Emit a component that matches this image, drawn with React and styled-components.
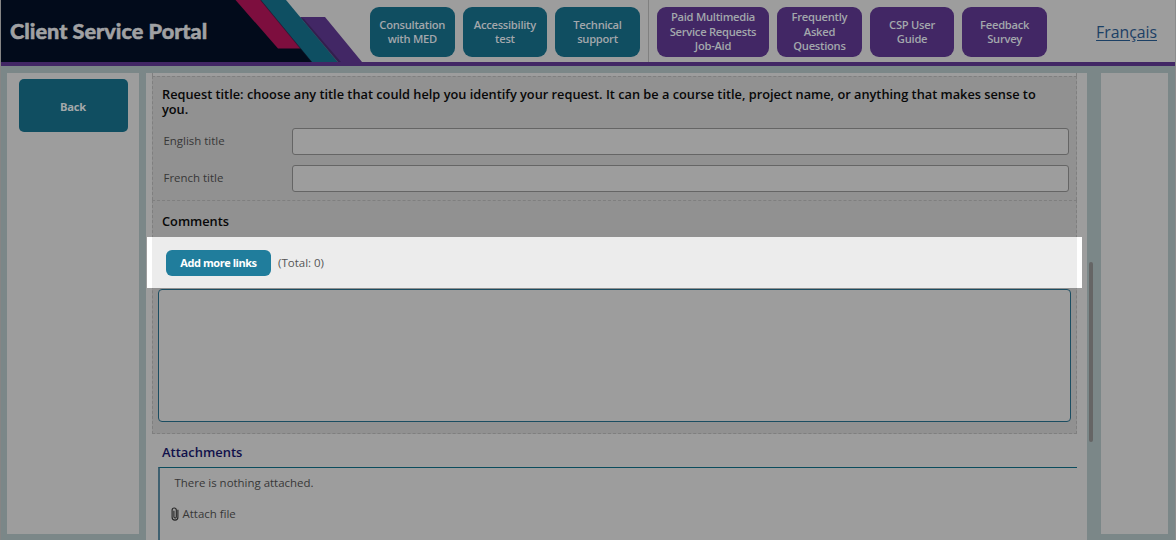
import React from "react";
import styled, { createGlobalStyle } from "styled-components";

const c = {
  surface: "#9d9d9d",
  section: "#919191",
  frame: "#7b8788",
  navy: "#020b1b",
  teal: "#104e61",
  purple: "#422765",
  text: "#373737",
};

const GlobalStyle = createGlobalStyle`
  * { box-sizing: border-box; }
  body {
    margin: 0;
    overflow: hidden;
    background: ${c.frame};
    color: ${c.text};
    font-family: "Open Sans", "Noto Sans", sans-serif;
  }
  button { font-family: inherit; border: 0; padding: 0; }
`;

const Page = styled.div`
  display: flex;
  flex-direction: column;
  width: 1176px;
  height: 540px;
  overflow: hidden;
  border-left: 1px solid #858585;
  border-right: 1px solid #8c8c8c;
`;

const Header = styled.header`
  display: flex;
  flex: 0 0 66px;
  background: ${c.surface};
  border-bottom: 4px solid ${c.purple};
`;

const Brand = styled.div`
  position: relative;
  flex: 0 0 361px;
  height: 62px;
`;

const BrandArt = styled.svg`
  display: block;
  width: 361px;
  height: 62px;
`;

const BrandName = styled.h1`
  position: absolute;
  left: 9px;
  top: 17px;
  margin: 0;
  color: #a0a1a3;
  font: 900 21.7px/28px Lato, sans-serif;
  -webkit-text-stroke: 0.5px #a0a1a3;
  white-space: nowrap;
`;

const Nav = styled.nav`
  display: flex;
  gap: 8px;
  padding: 7px 0 0 8px;
`;

const Divider = styled.span`
  width: 1px;
  height: 62px;
  margin: -7px 0 0;
  background: #808080;
`;

const NavButton = styled.button`
  flex: none;
  width: ${(p) => p.$width || 84.6}px;
  height: 50px;
  border-radius: 9px;
  background: ${(p) => c[p.$tone]};
  color: #a3a7ac;
  font-size: 11.2px;
  font-weight: 600;
  letter-spacing: -0.27px;
  line-height: 14.5px;
  white-space: pre-line;
`;

const Language = styled.a`
  margin: 21px 18px 0 auto;
  color: #1c4065;
  font-size: 15.8px;
  line-height: 22px;
  text-decoration: underline;
  text-underline-offset: 2px;
`;

const Body = styled.div`
  display: flex;
  flex: 1;
  min-height: 0;
  padding: 7px 6px 0;
`;

const SidePanel = styled.aside`
  flex: 0 0 ${(p) => p.$width}px;
  height: 461px;
  padding: 6px 11px 0 11.5px;
  background: ${c.surface};
`;

const BackButton = styled.button`
  width: 109px;
  height: 53px;
  padding-top: 1px;
  border-radius: 5px;
  background: ${c.teal};
  color: #a3a8aa;
  font-size: 11.2px;
  font-weight: 700;
  letter-spacing: -0.2px;
`;

const Main = styled.main`
  flex: 0 0 941px;
  margin-left: 7px;
  padding: 0 10px 0 6px;
  background: ${c.surface};
`;

const Track = styled.div`
  flex: 0 0 14px;
  padding: 189px 0 0 2px;
`;

const Thumb = styled.div`
  width: 4px;
  height: 180px;
  border-radius: 2px;
  background: #656565;
`;

const Section = styled.section`
  height: ${(p) => p.$height}px;
  border: 1px dashed #7f7f7f;
  border-width: ${(p) => (p.$last ? "1px" : "1px 1px 0")};
  background: ${c.section};
`;

const SectionStub = styled.div`
  height: 3px;
  border: 1px dashed #7f7f7f;
  border-width: 0 1px;
`;

const Heading = styled.h2`
  margin: 0;
  padding: ${(p) => p.$top}px 30px 0 ${(p) => p.$left || 9}px;
  color: ${(p) => p.$color || "#080808"};
  font-size: ${(p) => p.$size || 12.77}px;
  font-weight: 600;
  line-height: 15px;
`;

const Field = styled.label`
  display: flex;
  align-items: center;
  height: 27px;
  margin: ${(p) => p.$top}px 7px 0 10.5px;
  font-size: 11.45px;
`;

const FieldName = styled.span`
  flex: 0 0 128px;
  padding-bottom: 2px;
`;

const TextInput = styled.input`
  flex: 1;
  height: 27px;
  border: 1px solid #656565;
  border-radius: 3px;
  background: ${c.surface};
`;

const LinksRow = styled.div`
  display: flex;
  align-items: center;
  gap: 7px;
  height: 51px;
  margin: 8px -6px 0;
  padding-left: 14px;
  border: solid #fff;
  border-width: 0 5px;
  background: #ececec;
  color: #555;
  font-size: 11.5px;
`;

const Total = styled.span`
  padding-bottom: 1px;
`;

const AddButton = styled.button`
  width: 105px;
  height: 26px;
  border-radius: 6px;
  background: #207d9c;
  color: #fff;
  font-size: 11px;
  font-weight: 700;
  letter-spacing: -0.45px;
`;

const CommentBox = styled.textarea`
  display: block;
  width: 913px;
  height: 133px;
  margin: 1px 0 0 5px;
  border: 2px solid #1b4d61;
  border-width: 1px 1.5px 1.5px 1px;
  border-radius: 4px;
  background: ${c.surface};
  resize: none;
`;

const Attachments = styled.div`
  height: 80px;
  margin: 7px 0 0 6px;
  padding: 7px 0 0 11px;
  border-top: 1px solid #0b4c5d;
  border-left: 2px solid #3f6070;
  font-size: 11.45px;
  line-height: 16px;
`;

const EmptyNote = styled.div`
  padding-left: 3.5px;
`;

const AttachLink = styled.div`
  display: flex;
  align-items: center;
  gap: 3.5px;
  margin-top: 15px;
`;

const Clip = () => (
  <svg width="8" height="14" viewBox="0 0 8 14" fill="none" stroke="#242424" strokeWidth="1.1">
    <path d="M6.9 2.8v7.4a2.9 2.9 0 0 1-5.8 0V3.1a2.1 2.1 0 0 1 4.2 0v6.7a1.2 1.2 0 0 1-2.4 0V3.8" />
  </svg>
);

const Banner = () => (
  <BrandArt viewBox="1 0 361 62">
    <path d="M0 0H262L313 62H0Z" fill={c.navy} />
    <path d="M300 17H325L362 62H338Z" fill={c.purple} />
    <path d="M300 17L304 19L341 62H335Z" fill="#281b40" opacity="0.6" />
    <path d="M235.500 0H261L301 48.500H278Z" fill="#7d0e3e" />
    <path d="M260 0L311 62H314L264 1Z" fill="#0c1a2c" opacity="0.55" />
    <path d="M261 0H286L337.500 62H312Z" fill="#0e4f62" />
  </BrandArt>
);

const services = ["Consultation\nwith MED", "Accessibility\ntest", "Technical\nsupport"];
const resources = [
  ["Paid Multimedia\nService Requests\nJob-Aid", 112.4],
  ["Frequently\nAsked\nQuestions"],
  ["CSP User\nGuide"],
  ["Feedback\nSurvey"],
];

export default function App() {
  return (
    <>
      <GlobalStyle />
      <Page>
        <Header>
          <Brand>
            <Banner />
            <BrandName>Client Service Portal</BrandName>
          </Brand>
          <Nav>
            {services.map((label) => (
              <NavButton key={label} $tone="teal">{label}</NavButton>
            ))}
            <Divider />
            {resources.map(([label, width]) => (
              <NavButton key={label} $tone="purple" $width={width}>{label}</NavButton>
            ))}
          </Nav>
          <Language>Français</Language>
        </Header>
        <Body>
          <SidePanel $width={132}>
            <BackButton>Back</BackButton>
          </SidePanel>
          <Main>
            <SectionStub />
            <Section $height={124}>
              <Heading $top={10}>
                Request title: choose any title that could help you identify your request. It can be a course title, project name, or anything that makes sense to you.
              </Heading>
              <Field $top={11}>
                <FieldName>English title</FieldName>
                <TextInput />
              </Field>
              <Field $top={10}>
                <FieldName>French title</FieldName>
                <TextInput />
              </Field>
            </Section>
            <Section $height={234} $last>
              <Heading $top={13}>Comments</Heading>
              <LinksRow>
                <AddButton>Add more links</AddButton>
                <Total>(Total: 0)</Total>
              </LinksRow>
              <CommentBox />
            </Section>
            <Heading as="h3" $top={11} $left={10} $size={12.95} $color="#10104a">Attachments</Heading>
            <Attachments>
              <EmptyNote>There is nothing attached.</EmptyNote>
              <AttachLink>
                <Clip />
                <span>Attach file</span>
              </AttachLink>
            </Attachments>
          </Main>
          <Track>
            <Thumb />
          </Track>
          <SidePanel $width={67} />
        </Body>
      </Page>
    </>
  );
}
